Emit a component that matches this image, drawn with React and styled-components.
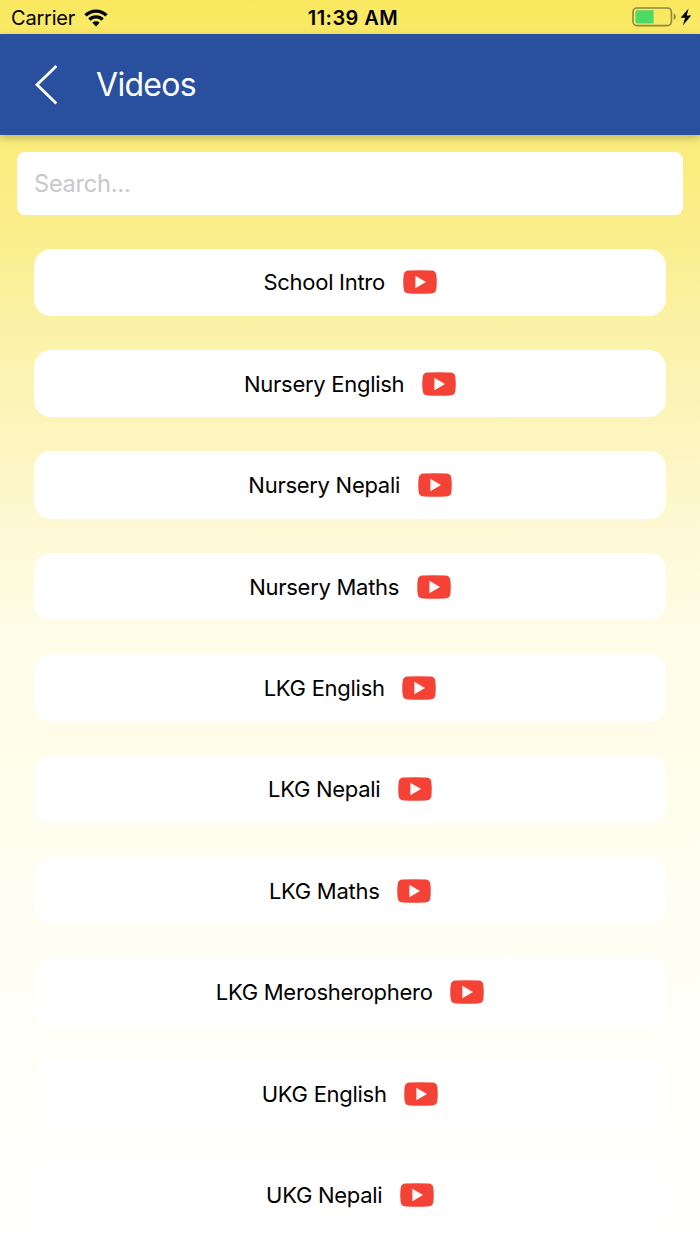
import React from 'react'
import styled, { createGlobalStyle } from 'styled-components'

const videos = [
	'School Intro',
	'Nursery English',
	'Nursery Nepali',
	'Nursery Maths',
	'LKG English',
	'LKG Nepali',
	'LKG Maths',
	'LKG Merosherophero',
	'UKG English',
	'UKG Nepali'
]

const WifiIcon = () => (
	<svg width='24' height='18' viewBox='0 0 24 18'>
		<g fill='none' stroke='#000' strokeWidth='3.4'>
			<path d='M1.5 6.4a15 15 0 0 1 21 0' />
			<path d='M5.4 10.6a9.4 9.4 0 0 1 13.2 0' />
		</g>
		<path d='M12 17.4l-3.6-3.6a5.2 5.2 0 0 1 7.2 0z' />
	</svg>
)

const BatteryIcon = () => (
	<svg width='44' height='20' viewBox='0 0 44 20'>
		<rect x='1' y='1' width='38.4' height='17.6' rx='4' fill='none' stroke='#8f8741' strokeWidth='1.6' />
		<path d='M3.4 5a1.8 1.8 0 0 1 1.8-1.8h16.4v13.2H5.2a1.8 1.8 0 0 1-1.8-1.8z' fill='#4cd964' />
		<path d='M41.6 6.6c2.8 1.2 2.8 5.2 0 6.4z' fill='#8f8741' />
	</svg>
)

const BoltIcon = () => (
	<svg width='12' height='18' viewBox='0 0 12 18'>
		<path d='M8.6 0.4L0.6 9.8h4.6L2.8 17.6L11.2 7.6H6.7z' />
	</svg>
)

const BackIcon = () => (
	<svg width='24' height='42' viewBox='0 0 24 42'>
		<path d='M22.4 2L3 20.8L22.4 39.6' fill='none' stroke='#fff' strokeWidth='2.8' />
	</svg>
)

const PlayIcon = () => (
	<svg width='34' height='24' viewBox='0 0 34 24'>
		<path
			d='M6 .6Q17 0 28 .6C31.6 .8 32.8 2 33.3 5Q34.2 12 33.3 19C32.8 22 31.6 23.2 28 23.4Q17 24 6 23.4C2.4 23.2 1.2 22 .7 19Q-.2 12 .7 5C1.2 2 2.4 .8 6 .6z'
			fill='#f44336'
		/>
		<path d='M12.4 5.8v12.4L23 12z' fill='#fafafa' />
	</svg>
)

const App = () => (
	<Screen>
		<GlobalStyle />
		<StatusBar>
			<Carrier>
				<span>Carrier</span>
				<WifiIcon />
			</Carrier>
			<Clock>11:39 AM</Clock>
			<Power>
				<BatteryIcon />
				<BoltIcon />
			</Power>
		</StatusBar>
		<Header>
			<BackButton aria-label='Back'>
				<BackIcon />
			</BackButton>
			<Title>Videos</Title>
		</Header>
		<Search placeholder='Search...' />
		<List>
			{videos.map(name => (
				<Card key={name}>
					<span>{name}</span>
					<PlayIcon />
				</Card>
			))}
		</List>
	</Screen>
)

export default App

const GlobalStyle = createGlobalStyle`
	* {
		box-sizing: border-box;
	}
	body {
		margin: 0;
		overflow: hidden;
		font-family: Inter, 'Liberation Sans', sans-serif;
	}
	svg {
		display: block;
		flex-shrink: 0;
	}
`

const Screen = styled.div`
	height: 1244px;
	overflow: hidden;
	display: flex;
	flex-direction: column;
	background: linear-gradient(
		#f9e85f 0,
		#faec7d 150px,
		#faee8b 230px,
		#fbf2a8 333px,
		#fcf5be 435px,
		#fef9d5 535px,
		#fffce6 620px,
		#fffdea 740px,
		#fffef2 900px,
		#fffff8 1050px,
		#ffffff 1244px
	);
`

const StatusBar = styled.div`
	height: 34px;
	flex-shrink: 0;
	padding: 0 8px 0 11px;
	display: grid;
	grid-template-columns: 1fr auto 1fr;
	align-items: center;
	font-size: 20px;
	line-height: 32px;
`

const Carrier = styled.div`
	display: flex;
	align-items: center;
	gap: 9px;
	padding-top: 1px;
	letter-spacing: -0.2px;
`

const Clock = styled.div`
	padding: 2px 0 0 3px;
	font-weight: 600;
	letter-spacing: 0.45px;
`

const Power = styled.div`
	display: flex;
	justify-content: flex-end;
	align-items: center;
	gap: 4px;
	padding-bottom: 1px;
`

const Header = styled.header`
	height: 101px;
	flex-shrink: 0;
	padding-left: 34px;
	display: flex;
	align-items: center;
	background: #29509e;
	color: #fff;
	box-shadow: 0 3px 8px rgba(0, 0, 0, 0.24);
`

const BackButton = styled.button`
	padding: 0;
	border: none;
	background: transparent;
`

const Title = styled.h1`
	margin: 0 0 1px 38px;
	font-size: 32px;
	font-weight: 400;
	letter-spacing: -0.7px;
`

const Search = styled.input`
	height: 63px;
	flex-shrink: 0;
	margin: 17px 17px 0;
	padding: 0 17px;
	border: none;
	border-radius: 8px;
	background: #fff;
	font-family: inherit;
	font-size: 23.6px;
	letter-spacing: -0.25px;
	&::placeholder {
		color: #c7c7cd;
	}
`

const List = styled.div`
	padding: 33.6px 34px 0;
	display: flex;
	flex-direction: column;
	gap: 34px;
`

const Card = styled.div`
	height: 67.4px;
	flex-shrink: 0;
	padding-top: 0.4px;
	display: flex;
	justify-content: center;
	align-items: center;
	gap: 17.6px;
	border-radius: 17px;
	background: #fff;
	color: #000;
	font-size: 22px;
	letter-spacing: -0.28px;
`
